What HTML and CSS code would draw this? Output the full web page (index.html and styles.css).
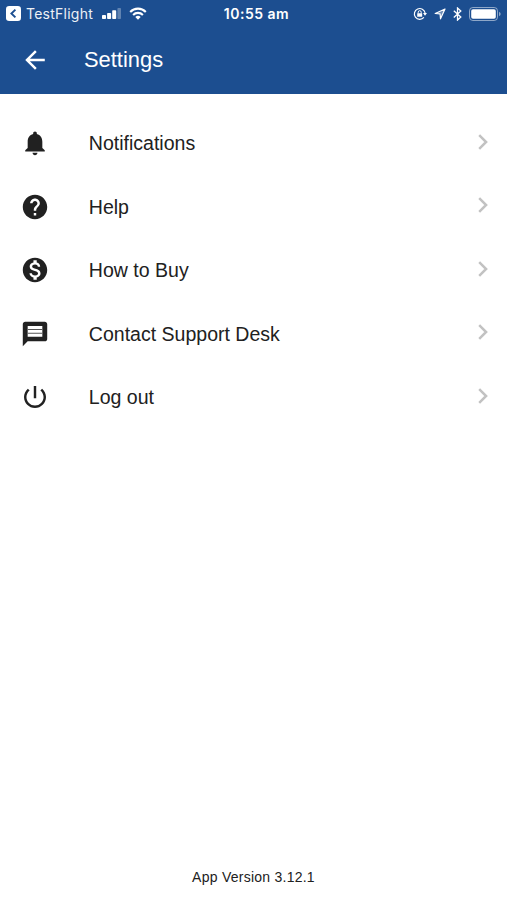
FILE: index.html
```html
<!DOCTYPE html>
<html lang="en">
<head>
<meta charset="utf-8">
<title>Settings</title>
<link rel="stylesheet" href="styles.css">
</head>
<body>
<div class="app">
  <header class="header">
    <div class="status">
      <div class="status-left">
        <svg class="back-badge" viewBox="0 0 15 15"><rect width="15" height="15" rx="3.2" fill="#fff"/><path d="M9.4 3.6L5.4 7.5l4 3.9" fill="none" stroke="#1c4e90" stroke-width="1.9"/></svg>
        <span class="carrier">TestFlight</span>
        <svg class="signal" viewBox="0 0 19 11"><g fill="#fff"><rect y="7" width="4" height="4" rx=".8"/><rect x="5.1" y="5" width="4" height="6" rx=".8"/><rect x="10.2" y="2.2" width="4" height="8.8" rx=".8"/><rect x="15.4" width="3.6" height="11" rx=".8" opacity=".3"/></g></svg>
        <svg class="wifi" viewBox="0 0 18 13"><g fill="none" stroke="#fff" stroke-width="2.1"><path d="M1.2 4.9a11 11 0 0 1 15.6 0"/><path d="M4.1 7.9a7 7 0 0 1 9.8 0"/></g><path d="M6.3 10a3.9 3.9 0 0 1 5.4 0L9 12.8z" fill="#fff"/></svg>
      </div>
      <span class="time">10:55 am</span>
      <div class="status-right">
        <svg class="lock" viewBox="0 0 14 14"><path d="M10.9 10.4A5.4 5.4 0 1 1 12.1 6" fill="none" stroke="#fff" stroke-width="1.2"/><path d="M10 6h4l-2 2.7z" fill="#fff"/><rect x="4.2" y="6.2" width="5" height="3.6" rx=".4" fill="#fff"/><path d="M5.2 6.5V5.2a1.5 1.5 0 0 1 3 0v1.3" fill="none" stroke="#fff"/></svg>
        <svg class="location" viewBox="0 0 12 12"><path d="M11 1L1.2 5.5l4.9.4.4 4.9z" fill="#fff" fill-opacity=".35" stroke="#fff" stroke-width="1.2" stroke-linejoin="round"/></svg>
        <svg class="bluetooth" viewBox="0 0 9 14"><path d="M.8 3.7l7 6.4-3.3 3V1l3.3 3-7 6.4" fill="none" stroke="#fff" stroke-width="1.3"/></svg>
        <svg class="battery" viewBox="0 0 32 14"><rect x=".5" y=".5" width="28" height="13" rx="3.3" fill="none" stroke="#fff" opacity=".5"/><rect x="2.2" y="2.2" width="24.6" height="9.6" rx="1.8" fill="#fff"/><path d="M30 4.7q1.7.7 1.7 2.3T30 9.3z" fill="#fff" opacity=".5"/></svg>
      </div>
    </div>
    <div class="toolbar">
      <svg class="icon" viewBox="0 0 24 24"><path d="M20 11H7.83l5.59-5.59L12 4l-8 8 8 8 1.41-1.41L7.83 13H20v-2z"/></svg>
      <h1 class="title">Settings</h1>
    </div>
  </header>
  <main class="list">
    <div class="row">
      <svg class="icon" viewBox="0 0 24 24"><path d="M12 22c1.1 0 2-.9 2-2h-4c0 1.1.89 2 2 2zm6-6v-5c0-3.07-1.64-5.64-4.5-6.32V4c0-.83-.67-1.5-1.5-1.5s-1.5.67-1.5 1.5v.68C7.63 5.36 6 7.92 6 11v5l-2 2v1h16v-1l-2-2z"/></svg>
      <span class="label">Notifications</span>
      <svg class="chevron" viewBox="0 0 10 16"><path d="M1.2 1.2L8.1 8l-6.9 6.8"/></svg>
    </div>
    <div class="row">
      <svg class="icon" viewBox="0 0 24 24"><path d="M12 2C6.48 2 2 6.48 2 12s4.48 10 10 10 10-4.48 10-10S17.52 2 12 2zm1 17h-2v-2h2v2zm2.07-7.75l-.9.92C13.45 12.9 13 13.5 13 15h-2v-.5c0-1.1.45-2.1 1.17-2.83l1.24-1.26c.37-.36.59-.86.59-1.41 0-1.1-.9-2-2-2s-2 .9-2 2H8c0-2.21 1.79-4 4-4s4 1.79 4 4c0 .88-.36 1.68-.93 2.25z"/></svg>
      <span class="label">Help</span>
      <svg class="chevron" viewBox="0 0 10 16"><path d="M1.2 1.2L8.1 8l-6.9 6.8"/></svg>
    </div>
    <div class="row">
      <svg class="icon" viewBox="0 0 24 24"><path d="M12 2C6.48 2 2 6.48 2 12s4.48 10 10 10 10-4.48 10-10S17.52 2 12 2zm1.41 16.09V20h-2.67v-1.93c-1.71-.36-3.16-1.46-3.27-3.4h1.96c.1 1.05.82 1.87 2.65 1.87 1.96 0 2.4-.98 2.4-1.59 0-.83-.44-1.61-2.67-2.14-2.48-.6-4.18-1.62-4.18-3.67 0-1.72 1.39-2.84 3.11-3.21V4h2.67v1.95c1.86.45 2.79 1.86 2.85 3.39H14.3c-.05-1.11-.64-1.87-2.22-1.87-1.5 0-2.4.68-2.4 1.64 0 .84.65 1.39 2.67 1.91s4.18 1.39 4.18 3.91c-.01 1.83-1.38 2.83-3.12 3.16z"/></svg>
      <span class="label">How to Buy</span>
      <svg class="chevron" viewBox="0 0 10 16"><path d="M1.2 1.2L8.1 8l-6.9 6.8"/></svg>
    </div>
    <div class="row">
      <svg class="icon" viewBox="0 0 24 24"><path d="M20 2H4c-1.1 0-1.99.9-1.99 2L2 22l4-4h14c1.1 0 2-.9 2-2V4c0-1.1-.9-2-2-2zM6 5.4h12v8.9H6z"/><path d="M6 8.35h12M6 11.4h12" stroke="#555" stroke-width=".85"/></svg>
      <span class="label">Contact Support Desk</span>
      <svg class="chevron" viewBox="0 0 10 16"><path d="M1.2 1.2L8.1 8l-6.9 6.8"/></svg>
    </div>
    <div class="row">
      <svg class="icon" viewBox="0 0 24 24"><path d="M13 3h-2v10h2V3zm4.83 2.17l-1.42 1.42C17.99 7.86 19 9.81 19 12c0 3.87-3.13 7-7 7s-7-3.13-7-7c0-2.19 1.01-4.14 2.58-5.42L6.17 5.17C4.23 6.82 3 9.26 3 12c0 4.97 4.03 9 9 9s9-4.03 9-9c0-2.74-1.23-5.18-3.17-6.83z"/></svg>
      <span class="label">Log out</span>
      <svg class="chevron" viewBox="0 0 10 16"><path d="M1.2 1.2L8.1 8l-6.9 6.8"/></svg>
    </div>
  </main>
  <footer class="version">App Version 3.12.1</footer>
</div>
</body>
</html>
```
FILE: styles.css
```css
* { box-sizing: border-box; }
body { margin: 0; background: #fff; font-family: "Liberation Sans", Arial, sans-serif; color: #212121; }
svg { display: block; flex: none; }
.app { height: 900px; display: flex; flex-direction: column; }
.header { height: 93.5px; background: #1c4e90; color: #fff; }
.status { height: 27px; display: grid; grid-template-columns: 1fr auto 1fr; align-items: center; padding: 0 6px; font-family: Inter, sans-serif; }
.status-left, .status-right { display: flex; align-items: center; }
.status-right { justify-content: flex-end; }
.back-badge { width: 15px; height: 15px; }
.carrier { font-size: 14px; line-height: 18px; letter-spacing: .25px; margin-left: 5px; width: 67px; white-space: nowrap; opacity: .92; }
.signal { width: 19px; height: 11px; margin-left: 9px; }
.wifi { width: 18px; height: 13px; margin-left: 8px; }
.time { font-size: 14px; line-height: 18px; font-weight: 600; letter-spacing: .5px; padding-left: 6px; }
.lock { width: 14px; height: 14px; }
.location { width: 12px; height: 12px; margin-left: 7px; }
.bluetooth { width: 9px; height: 14px; margin-left: 7px; }
.battery { width: 32px; height: 14px; margin-left: 7px; }
.toolbar { height: 66px; display: flex; align-items: center; padding-left: 20px; }
.icon { width: 30px; height: 30px; padding: .35px; fill: #212121; }
.toolbar .icon { fill: #fff; }
.title { margin: 0 0 0 34px; font-size: 21.9px; line-height: 28px; font-weight: 400; }
.list { padding: 18px 18px 0 20px; flex: 1; }
.row { height: 63.5px; display: flex; align-items: center; }
.label { flex: 1; margin-left: 38.8px; font-size: 19.55px; line-height: 26px; }
.chevron { width: 10px; height: 16px; margin: 0 1.5px 3px 0; fill: none; stroke: #c2c2c2; stroke-width: 2.5; }
.version { padding-bottom: 13px; text-align: center; font-size: 14px; line-height: 20px; letter-spacing: .25px; }
```
